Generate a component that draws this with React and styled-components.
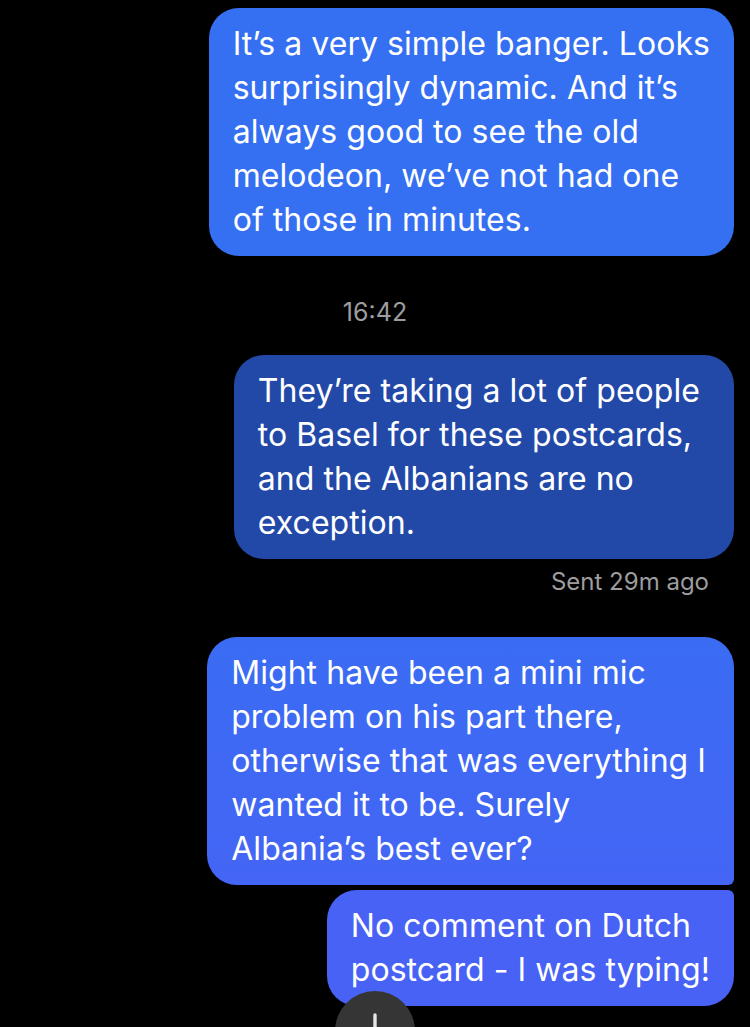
import React from "react";
import styled, { createGlobalStyle } from "styled-components";

const GlobalStyle = createGlobalStyle`
  html, body {
    margin: 0;
    padding: 0;
    background: #000;
  }
  body {
    font-family: Inter, "Noto Sans", "Liberation Sans", sans-serif;
    -webkit-font-smoothing: antialiased;
  }
`;

const Screen = styled.div`
  width: 750px;
  height: 1027px;
  background: #000;
  overflow: hidden;
  position: relative;
`;

const Thread = styled.div`
  display: flex;
  flex-direction: column;
  align-items: flex-end;
  padding: 8px 16px 0 16px;
`;

const Bubble = styled.div`
  box-sizing: border-box;
  max-width: 540px;
  padding: 14px ${(p) => p.$padRight || 24}px 14px 24px;
  border-radius: ${(p) => p.$radius || "30px"};
  background: ${(p) => p.$bg};
  color: #fff;
  font-size: 32px;
  line-height: 44px;
  letter-spacing: 0.05px;
  white-space: pre-line;
  margin-top: ${(p) => p.$gap || 0}px;
`;

const Stamp = styled.div`
  align-self: center;
  margin-top: 41px;
  margin-bottom: 28px;
  color: #9d9d9f;
  font-size: 25px;
  line-height: 30px;
`;

const Receipt = styled.div`
  margin-top: 8px;
  margin-right: 25px;
  color: #9d9d9f;
  font-size: 24px;
  line-height: 30px;
`;

const ScrollDown = styled.button`
  position: absolute;
  left: 50%;
  top: 991px;
  transform: translateX(-50%);
  width: 80px;
  height: 80px;
  border: none;
  border-radius: 50%;
  background: #353535;
  padding: 0;
  display: flex;
  align-items: flex-start;
  justify-content: center;
`;

const ArrowDown = () => (
  <svg width="40" height="56" viewBox="0 0 40 56" style={{ marginTop: 22 }}>
    <path
      d="M20 2 V50 M6 36 L20 50 L34 36"
      fill="none"
      stroke="#e6e6e6"
      strokeWidth="3.4"
      strokeLinecap="round"
      strokeLinejoin="round"
    />
  </svg>
);

const App = () => {
  return (
    <Screen>
      <GlobalStyle />
      <Thread>
        <Bubble $bg="#3570f2">
          {"It’s a very simple banger. Looks\nsurprisingly dynamic. And it’s\nalways good to see the old\nmelodeon, we’ve not had one\nof those in minutes."}
        </Bubble>
        <Stamp>16:42</Stamp>
        <Bubble $bg="#2249a8" $padRight={34}>
          {"They’re taking a lot of people\nto Basel for these postcards,\nand the Albanians are no\nexception."}
        </Bubble>
        <Receipt>Sent 29m ago</Receipt>
        <Bubble
          $gap={40}
          $bg="linear-gradient(180deg, #3a6cf3 0%, #4465f5 100%)"
          $radius="30px 30px 6px 30px"
          $padRight={28}
        >
          {"Might have been a mini mic\nproblem on his part there,\notherwise that was everything I\nwanted it to be. Surely\nAlbania’s best ever?"}
        </Bubble>
        <Bubble $gap={5} $bg="#4762f5" $radius="30px 6px 30px 30px">
          {"No comment on Dutch\npostcard - I was typing!"}
        </Bubble>
      </Thread>
      <ScrollDown aria-label="Scroll to latest">
        <ArrowDown />
      </ScrollDown>
    </Screen>
  );
};

export default App;
